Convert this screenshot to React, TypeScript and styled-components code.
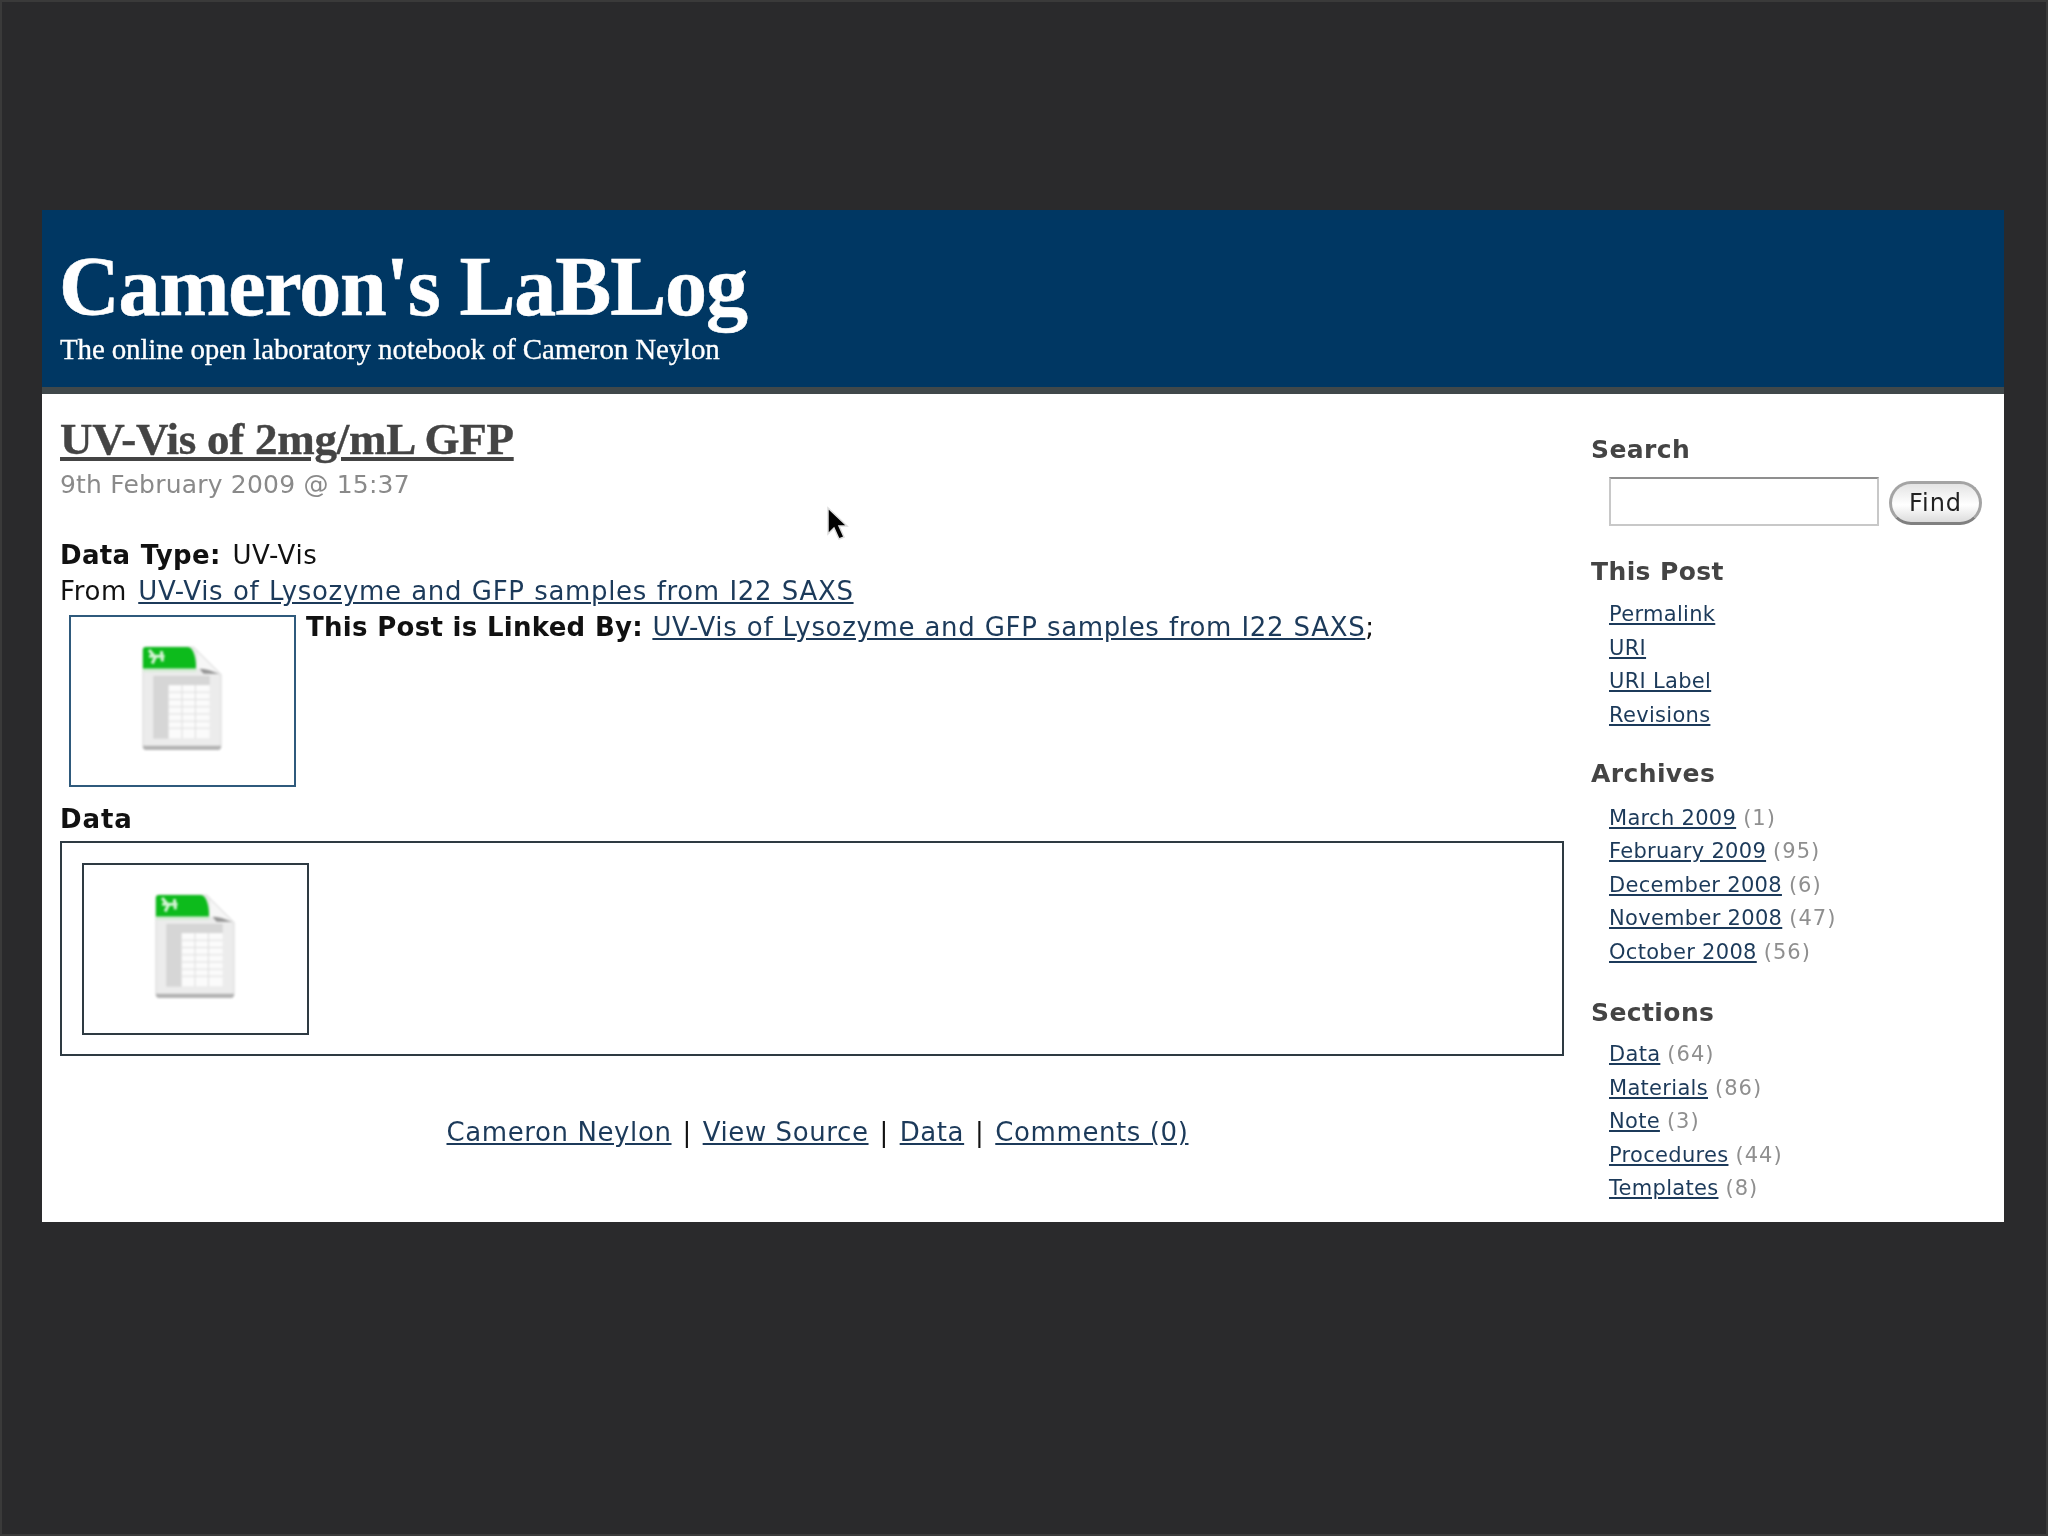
import styled, { createGlobalStyle } from "styled-components";

const GlobalStyle = createGlobalStyle`
  html, body {
    margin: 0;
    padding: 0;
    background: #2a2a2c;
  }
`;

const Stage = styled.div`
  width: 2048px;
  height: 1536px;
  box-sizing: border-box;
  padding: 208px 42px 0 40px;
  border: 2px solid #3a3a3a;
  overflow: hidden;
  position: relative;
`;

const Slide = styled.div`
  background: #fff;
  height: 1012px;
  filter: blur(0.6px);
  font-family: "DejaVu Sans", Verdana, sans-serif;
  color: #111;
`;

const Masthead = styled.header`
  height: 184px;
  box-sizing: border-box;
  padding: 32px 18px 0;
  background: #003763;
  border-bottom: 7px solid #40484a;
  color: #fff;
  font-family: "Liberation Serif", "Times New Roman", serif;
`;

const BlogName = styled.h1`
  margin: 0 0 0 -1px;
  font-size: 84px;
  line-height: 90px;
  font-weight: 700;
  letter-spacing: -1.1px;
  -webkit-text-stroke: 0.6px #fff;
`;

const Tagline = styled.p`
  margin: 0;
  font-size: 29px;
  line-height: 34px;
  letter-spacing: -0.15px;
  -webkit-text-stroke: 0.3px #fff;
`;

const Columns = styled.div`
  display: grid;
  grid-template-columns: 1504px 1fr;
  column-gap: 27px;
  padding-left: 18px;
`;

const Post = styled.main`
  padding-top: 20px;
`;

const PostTitle = styled.h2`
  margin: 0;
  font-family: "Liberation Serif", "Times New Roman", serif;
  font-size: 45px;
  line-height: 50px;
  font-weight: 700;
  letter-spacing: -0.25px;
  -webkit-text-stroke: 0.4px #444;
  a {
    color: #444;
  }
`;

const PostDate = styled.div`
  margin-top: 6px;
  font-size: 25px;
  line-height: 30px;
  letter-spacing: 0.2px;
  color: #8a8a8a;
`;

const Meta = styled.div`
  margin-top: 37px;
  font-size: 26px;
  line-height: 36px;
  letter-spacing: 0.65px;
  word-spacing: 0.8px;
  b {
    letter-spacing: 0.35px;
    margin-right: 2px;
  }
  a {
    margin-left: 1.5px;
  }
`;

const BodyLink = styled.a`
  color: #1c3a5a;
  text-decoration: underline;
`;

const LinkedRow = styled.div`
  display: flex;
  align-items: flex-start;
  font-size: 26px;
  line-height: 36px;
  letter-spacing: 0.65px;
  word-spacing: 0.5px;
  padding-left: 9px;
  margin-top: 6px;
  b {
    letter-spacing: 0.3px;
    word-spacing: 0;
  }
`;

const LinkedText = styled.div`
  margin-left: 10px;
  margin-top: -6px;
`;

const Thumb = styled.div<{ $tone: string }>`
  width: 227px;
  height: 172px;
  box-sizing: border-box;
  border: 2px solid ${(p) => p.$tone};
  display: flex;
  align-items: center;
  justify-content: center;
  flex: none;
`;

const IconSvg = styled.svg`
  width: 82px;
  height: 105px;
  margin-bottom: 6px;
  margin-right: 2px;
  filter: blur(0.9px);
`;

const DataHeading = styled.h3`
  margin: 14px 0 4px;
  font-size: 26px;
  line-height: 36px;
  font-weight: 700;
  letter-spacing: 0.9px;
`;

const DataBox = styled.div`
  width: 1504px;
  height: 215px;
  box-sizing: border-box;
  padding: 20px;
  border: 2px solid #2e3a42;
`;

const PostFooter = styled.div`
  margin-top: 58px;
  padding-left: 11px;
  text-align: center;
  font-size: 26px;
  line-height: 36px;
  letter-spacing: 0.6px;
`;

const Pipe = styled.span`
  margin: 0 2px;
`;

const Sidebar = styled.aside`
  padding-top: 38px;
`;

const SideHeading = styled.h4`
  margin: 0;
  font-size: 25px;
  line-height: 36px;
  font-weight: 700;
  letter-spacing: 0.4px;
  color: #444;
`;

const SearchRow = styled.div`
  display: flex;
  align-items: center;
  padding-left: 18px;
  margin-top: 9px;
  margin-bottom: 28px;
`;

const SearchInput = styled.input`
  width: 270px;
  height: 49px;
  box-sizing: border-box;
  border: 2px solid #c8c8c8;
  border-top-color: #8f8f8f;
  background: #fff;
  padding: 0;
  outline: none;
`;

const FindButton = styled.button`
  width: 93px;
  height: 44px;
  margin-left: 10px;
  margin-top: 3px;
  box-sizing: border-box;
  border: 3px solid #a4a4a4;
  border-bottom-color: #808080;
  border-radius: 22px;
  background: linear-gradient(#e4e4e4, #fff 55%, #dcdcdc);
  font-family: "DejaVu Sans", Verdana, sans-serif;
  font-size: 24px;
  letter-spacing: 1px;
  color: #222;
  padding: 0;
`;

const SideList = styled.ul<{ $before: number; $after: number }>`
  list-style: none;
  margin: ${(p) => p.$before}px 0 ${(p) => p.$after}px;
  padding: 0 0 0 18px;
  font-size: 21px;
  line-height: 33.5px;
  letter-spacing: 0.3px;
`;

const Count = styled.span`
  color: #8f8f8f;
  letter-spacing: 1px;
`;

const Cursor = styled.svg`
  position: absolute;
  left: 823px;
  top: 504px;
  width: 24px;
  height: 36px;
  filter: blur(0.5px);
`;

const thisPost = ["Permalink", "URI", "URI Label", "Revisions"];
const archives: [string, number][] = [
  ["March 2009", 1],
  ["February 2009", 95],
  ["December 2008", 6],
  ["November 2008", 47],
  ["October 2008", 56],
];
const sections: [string, number][] = [
  ["Data", 64],
  ["Materials", 86],
  ["Note", 3],
  ["Procedures", 44],
  ["Templates", 8],
];

function SheetIcon() {
  return (
    <IconSvg viewBox="0 0 78 102">
      <path d="M1 4 Q1 1 4 1 H50 L77 28 V96 Q77 100 73 100 H5 Q1 100 1 96 Z" fill="#ececec" stroke="#dcdcdc" />
      <path d="M1 97 H77 V98 Q77 101 73 101 H5 Q1 101 1 98 Z" fill="#b4b4b4" />
      <path d="M1 4 Q1 1 4 1 H44 Q52 1 53 22 H1 Z" fill="#0dbb1c" />
      <path d="M53 4 L76 27 H66 Q56 26 53 22 Z" fill="#f6f6f6" stroke="#e4e4e4" />
      <path d="M56 22 Q64 22 75 27 H60 Z" fill="#969696" />
      <path d="M7 4 L13 11 L10 17 M19 5 L20 15 M7 10 H22" stroke="#d4f4d4" strokeWidth="3" fill="none" />
      <rect x="1" y="22" width="52" height="3" fill="#d4ecd4" />
      <rect x="11" y="29" width="55" height="61" fill="#d6d6d6" />
      <rect x="26" y="38" width="40" height="52" fill="#fbfbfb" />
      {[45, 52, 59, 66, 73, 80].map((y) => (
        <line key={y} x1="26" x2="66" y1={y} y2={y} stroke="#dedede" />
      ))}
      {[39, 52].map((x) => (
        <line key={x} x1={x} x2={x} y1="38" y2="90" stroke="#dedede" />
      ))}
    </IconSvg>
  );
}

export default function App() {
  return (
    <Stage>
      <GlobalStyle />
      <Slide>
        <Masthead>
          <BlogName>Cameron's LaBLog</BlogName>
          <Tagline>The online open laboratory notebook of Cameron Neylon</Tagline>
        </Masthead>
        <Columns>
          <Post>
            <PostTitle>
              <a href="#">UV-Vis of 2mg/mL GFP</a>
            </PostTitle>
            <PostDate>9th February 2009 @ 15:37</PostDate>
            <Meta>
              <div>
                <b>Data Type:</b> UV-Vis
              </div>
              <div>
                From <BodyLink href="#">UV-Vis of Lysozyme and GFP samples from I22 SAXS</BodyLink>
              </div>
            </Meta>
            <LinkedRow>
              <Thumb $tone="#2f5a7c">
                <SheetIcon />
              </Thumb>
              <LinkedText>
                <b>This Post is Linked By:</b>{" "}
                <BodyLink href="#">UV-Vis of Lysozyme and GFP samples from I22 SAXS</BodyLink>;
              </LinkedText>
            </LinkedRow>
            <DataHeading>Data</DataHeading>
            <DataBox>
              <Thumb $tone="#2e3a42">
                <SheetIcon />
              </Thumb>
            </DataBox>
            <PostFooter>
              <BodyLink href="#">Cameron Neylon</BodyLink> <Pipe>|</Pipe> <BodyLink href="#">View Source</BodyLink>{" "}
              <Pipe>|</Pipe> <BodyLink href="#">Data</BodyLink> <Pipe>|</Pipe>{" "}
              <BodyLink href="#">Comments (0)</BodyLink>
            </PostFooter>
          </Post>
          <Sidebar>
            <SideHeading>Search</SideHeading>
            <SearchRow>
              <SearchInput />
              <FindButton>Find</FindButton>
            </SearchRow>
            <SideHeading>This Post</SideHeading>
            <SideList $before={8} $after={24}>
              {thisPost.map((name) => (
                <li key={name}>
                  <BodyLink href="#">{name}</BodyLink>
                </li>
              ))}
            </SideList>
            <SideHeading>Archives</SideHeading>
            <SideList $before={9.5} $after={26}>
              {archives.map(([name, n]) => (
                <li key={name}>
                  <BodyLink href="#">{name}</BodyLink> <Count>({n})</Count>
                </li>
              ))}
            </SideList>
            <SideHeading>Sections</SideHeading>
            <SideList $before={7} $after={0}>
              {sections.map(([name, n]) => (
                <li key={name}>
                  <BodyLink href="#">{name}</BodyLink> <Count>({n})</Count>
                </li>
              ))}
            </SideList>
          </Sidebar>
        </Columns>
      </Slide>
      <Cursor viewBox="0 0 24 36">
        <path d="M3 2 V28 L9 22 L14 33 L19 31 L14 20 H22 Z" fill="#000" stroke="#ddd" strokeWidth="1.5" />
      </Cursor>
    </Stage>
  );
}
